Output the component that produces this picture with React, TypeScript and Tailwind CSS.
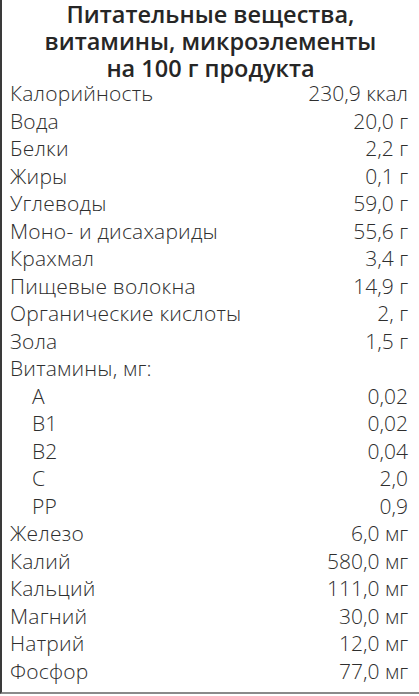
import React from "react";

const rows: [string, string, boolean?][] = [
  ["Калорийность", "230,9 ккал"],
  ["Вода", "20,0 г"],
  ["Белки", "2,2 г"],
  ["Жиры", "0,1 г"],
  ["Углеводы", "59,0 г"],
  ["Моно- и дисахариды", "55,6 г"],
  ["Крахмал", "3,4 г"],
  ["Пищевые волокна", "14,9 г"],
  ["Органические кислоты", "2, г"],
  ["Зола", "1,5 г"],
  ["Витамины, мг:", ""],
  ["A", "0,02", true],
  ["B1", "0,02", true],
  ["B2", "0,04", true],
  ["C", "2,0", true],
  ["PP", "0,9", true],
  ["Железо", "6,0 мг"],
  ["Калий", "580,0 мг"],
  ["Кальций", "111,0 мг"],
  ["Магний", "30,0 мг"],
  ["Натрий", "12,0 мг"],
  ["Фосфор", "77,0 мг"],
];

export default function App() {
  return (
    <div
      className="w-[419px] h-[696px] bg-white text-[#2e2e2e] overflow-hidden"
      style={{ fontFamily: '"Open Sans", "DejaVu Sans", sans-serif' }}
    >
      <div className="h-[694px] border-l-2 border-l-[#3a3a3a] border-b-2 border-b-[#8a8a8a] flex flex-col">
        <div className="text-center font-semibold text-[23.5px] leading-[27px] pt-[1px] text-[#262626]">
          <div>Питательные вещества,</div>
          <div>витамины, микроэлементы</div>
          <div>на 100 г продукта</div>
        </div>
        <div className="flex flex-col pl-[8px] pr-[11px] -mt-[2px]">
          {rows.map(([name, val, indent], i) => (
            <div key={i} className="flex justify-between items-center h-[27.5px] text-[21px] font-light">
              <span className={indent ? "pl-[22px] tracking-[0.2px]" : "tracking-[0.2px]"}>{name}</span>
              <span>{val}</span>
            </div>
          ))}
        </div>
      </div>
    </div>
  );
}
